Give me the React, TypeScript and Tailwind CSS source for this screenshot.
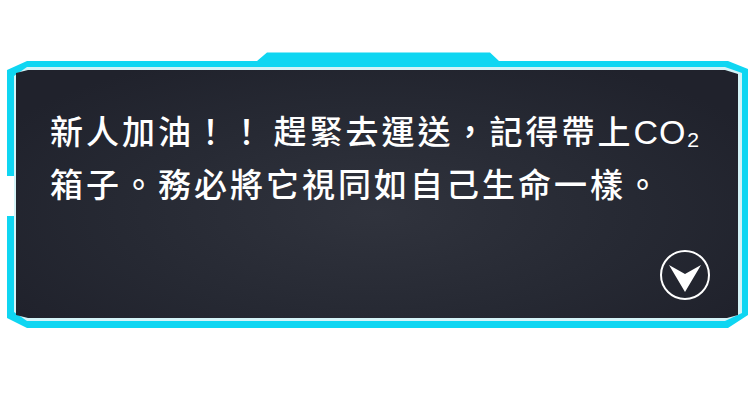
const App = () => {
	return (
		<div className="w-[755px] h-[400px] bg-white pt-[52px] pl-[7px] overflow-hidden">
			<div className="relative w-[743px] h-[277px] pt-[18px] pl-[9px]">
				<svg className="absolute inset-0" width="743" height="277" viewBox="0 0 743 277" fill="none">
					<path
						d="M250 9 L260 0.5 H483 L492 9 H721 L741 17 V263 L721 276 H20 L0 266 V18 L20 9 Z"
						fill="#0fd6f2"
					/>
					<path d="M0 124 H7 V164 H0 Z" fill="#fff" />
					<path d="M7 24 L20 15 H718 L735 21 V261 L718 269 H20 L7 260 Z" fill="#d4f3f7" />
				</svg>
				<div className="relative w-[722px] h-[248px] [clip-path:polygon(12px_0,709px_0,722px_4px,722px_245px,711px_248px,12px_248px,0_245px,0_3px)] bg-[radial-gradient(ellipse_60%_70%_at_50%_58%,#30333d_0%,#262933_60%,#20222c_100%)] pt-[35px] pl-[34px]">
					<p className="w-[660px] font-['Noto_Sans_CJK_TC','Noto_Sans_CJK_SC',sans-serif] font-medium text-[33px] leading-[51px] tracking-[3px] [word-spacing:-3px] text-white">
						新人加油！！ 趕緊去運送，記得帶上
						<span className="font-['Liberation_Sans',sans-serif] font-normal text-[34px] tracking-[1px]">CO₂</span>
						箱子。務必將它視同如自己生命一樣。
					</p>
					<svg className="absolute left-[643px] top-[179px]" width="52" height="52" viewBox="0 0 52 52" fill="none">
						<circle cx="26" cy="26" r="24" stroke="#fff" strokeWidth="2" />
						<path d="M10 16 L26 25 L42 16 L26 43 Z" fill="#fff" />
					</svg>
				</div>
			</div>
		</div>
	);
};

export default App;
